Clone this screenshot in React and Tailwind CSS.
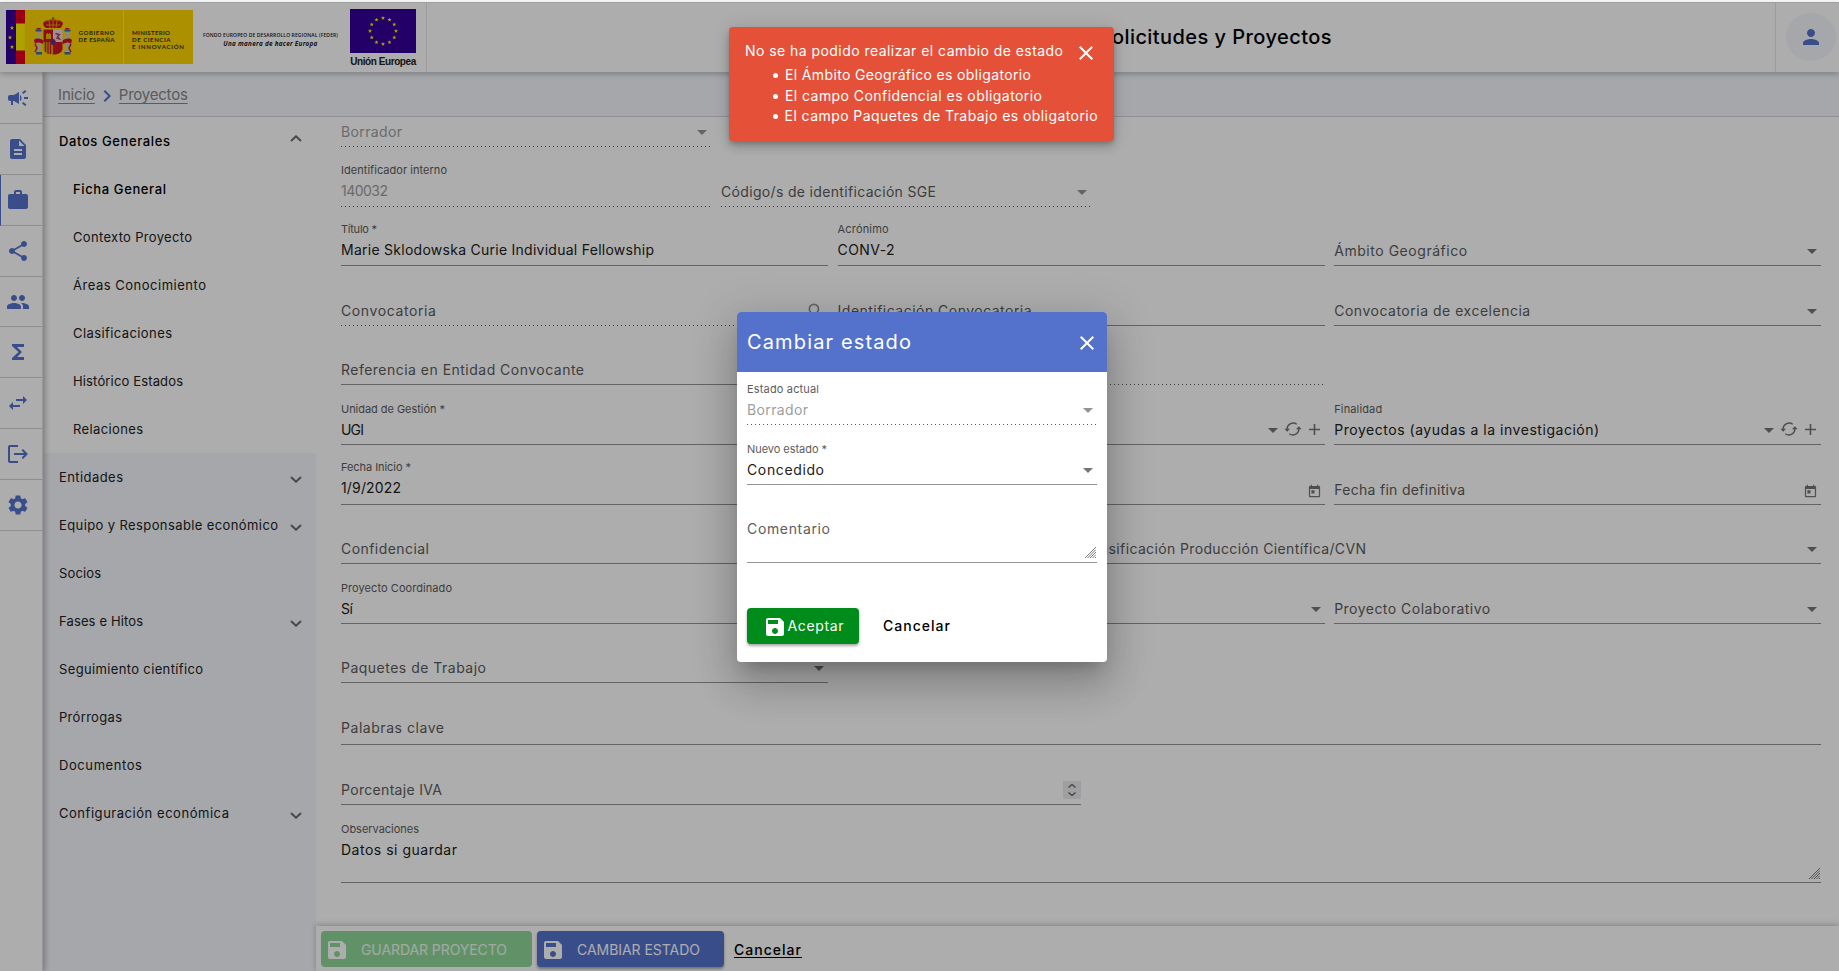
import React, { useLayoutEffect, useRef, useState } from "react";
import {
  MdCampaign, MdDescription, MdWork, MdShare, MdPeople, MdFunctions, MdSwapHoriz,
  MdLogout, MdSettings, MdPerson, MdSave, MdClose, MdToday, MdSearch, MdChevronRight, MdAdd,
} from "react-icons/md";

// Single-line text whose letter spacing is tuned so that it fills the given width.
function Fit({ w, className = "", children }) {
  const ref = useRef(null);
  const [spacing, setSpacing] = useState(0);
  useLayoutEffect(() => {
    const natural = ref.current.getBoundingClientRect().width;
    setSpacing((w - natural) / Math.max(1, String(children).length - 1));
  }, [w, children]);
  return (
    <span ref={ref} className={`inline-block whitespace-pre ${className}`} style={{ letterSpacing: `${spacing}px` }}>
      {children}
    </span>
  );
}

function Caret({ className = "text-[#757575]" }) {
  return (
    <svg className={`h-[5px] w-[10px] shrink-0 ${className}`} viewBox="0 0 10 5" fill="currentColor">
      <path d="M0 0h10L5 5z" />
    </svg>
  );
}

function Chevron({ up, className = "" }) {
  return (
    <svg className={`h-[7px] w-[12px] shrink-0 text-[#6b6b6b] ${className}`} viewBox="0 0 12 7" fill="none" stroke="currentColor" strokeWidth="2">
      <path d={up ? "M1 6l5-4.700L11 6" : "M1 1l5 4.700L11 1"} />
    </svg>
  );
}

function Refresh() {
  return (
    <svg className="h-[14px] w-[18px] shrink-0" viewBox="0 0 18 14" fill="none" stroke="currentColor" strokeWidth="1.4">
      <path d="M3.200 7.800A6 6 0 0 1 12.800 2.300M14.800 6.200A6 6 0 0 1 5.200 11.700" />
      <path d="M.4 6.700h5.600L3.200 9.700zM12 7.300h5.600L14.800 4.300z" fill="currentColor" stroke="none" />
    </svg>
  );
}

function Grip({ className = "" }) {
  return (
    <svg className={`h-[11px] w-[11px] ${className}`} viewBox="0 0 11 11" stroke="#6a6a6a" strokeWidth="0.9">
      <path d="M0 11L11 0M2.500 11L11 2.500M5 11l6-6M7.500 11L11 7.500M10 11l1-1" />
    </svg>
  );
}

function Field({ label, lw, value, vw, placeholder, pw, disabled, icon, tall }) {
  return (
    <div className="flex h-full flex-col justify-end">
      {label && (
        <div className="mb-[4px] h-4 text-[11px] leading-4 text-[#5c5c5c]">
          <Fit w={lw}>{label}</Fit>
        </div>
      )}
      <div className={`flex items-center justify-between text-sm leading-[18px] ${tall || "mb-[5px] h-[18px]"}`}>
        {value ? (
          <Fit w={vw} className={disabled ? "text-[#9e9e9e]" : "text-[#212121]"}>{value}</Fit>
        ) : (
          <Fit w={pw ?? 0} className="text-[#5c5c5c]">{placeholder ?? ""}</Fit>
        )}
        <div className="flex items-center pr-[4px] text-[#757575]">
          {icon === "select" && <Caret className={disabled ? "text-[#949494]" : "text-[#757575]"} />}
          {icon === "search" && <MdSearch className="mr-[-2px] size-[20px] text-[#949494]" />}
          {icon === "date" && <MdToday className="mr-[-1px] mt-[2px] size-[15px]" />}
          {icon === "entity" && (
            <>
              <Caret />
              <span className="mb-[2px] ml-[6px] flex items-center">
                <Refresh />
                <MdAdd className="ml-[3px] mr-[-3px] size-[19px]" />
              </span>
            </>
          )}
        </div>
      </div>
      {disabled ? (
        <div className="h-px bg-[repeating-linear-gradient(to_right,#5c5c5c_0,#5c5c5c_1px,transparent_1px,transparent_4px)]" />
      ) : (
        <div className="h-px bg-[#949494]" />
      )}
    </div>
  );
}

const thirds = "grid grid-cols-[487px_487px_487px] gap-x-[9.6px]";

function Row({ className, children }) {
  return <div className={`shrink-0 ${className}`}>{children}</div>;
}

function Form() {
  return (
    <main className="flex h-[809px] flex-col overflow-hidden bg-white pl-[25px]">
      <Row className="h-[30px] w-[370px]">
        <Field value="Borrador" vw={61} disabled icon="select" />
      </Row>
      <Row className="grid h-[60px] grid-cols-[370px_370px] gap-x-[10px]">
        <Field label="Identificador interno" lw={106} value="140032" vw={47} disabled tall="mb-[6px] h-[18px]" />
        <Field placeholder="Código/s de identificación SGE" pw={215} disabled icon="select" />
      </Row>
      <Row className={`h-[59px] ${thirds}`}>
        <Field label="Título *" lw={36} value="Marie Sklodowska Curie Individual Fellowship" vw={313} tall="mb-[6px] h-[18px]" />
        <Field label="Acrónimo" lw={51} value="CONV-2" vw={57} tall="mb-[6px] h-[18px]" />
        <Field placeholder="Ámbito Geográfico" pw={133} icon="select" />
      </Row>
      <Row className={`h-[60px] ${thirds}`}>
        <Field placeholder="Convocatoria" pw={95} disabled icon="search" />
        <Field placeholder="Identificación Convocatoria" pw={194} />
        <Field placeholder="Convocatoria de excelencia" pw={196} icon="select" />
      </Row>
      <Row className={`h-[59px] ${thirds}`}>
        <Field placeholder="Referencia en Entidad Convocante" pw={243} />
        <Field disabled />
      </Row>
      <Row className={`h-[60px] ${thirds}`}>
        <Field label="Unidad de Gestión *" lw={104} value="UGI" vw={23} />
        <Field icon="entity" />
        <Field label="Finalidad" lw={48} value="Proyectos (ayudas a la investigación)" vw={265} icon="entity" />
      </Row>
      <Row className={`h-[60px] ${thirds}`}>
        <Field label="Fecha Inicio *" lw={70} value="1/9/2022" vw={60} tall="mb-[7px] h-[18px]" />
        <Field icon="date" />
        <Field placeholder="Fecha fin definitiva" pw={131} icon="date" />
      </Row>
      <Row className="grid h-[59px] grid-cols-[735px_735px] gap-x-[10px]">
        <Field placeholder="Confidencial" pw={88} />
        <Field placeholder="Clasificación Producción Científica/CVN" pw={280} icon="select" />
      </Row>
      <Row className={`h-[60px] ${thirds}`}>
        <Field label="Proyecto Coordinado" lw={111} value="Sí" vw={12} />
        <Field icon="select" />
        <Field placeholder="Proyecto Colaborativo" pw={156} icon="select" />
      </Row>
      <Row className={`h-[59px] ${thirds}`}>
        <Field placeholder="Paquetes de Trabajo" pw={145} icon="select" />
      </Row>
      <Row className="h-[62px] w-[1480px]">
        <Field placeholder="Palabras clave" pw={103} tall="mb-[7px] h-[18px]" />
      </Row>
      <Row className="relative h-[60px] w-[740px]">
        <Field placeholder="Porcentaje IVA" pw={101} />
        <div className="absolute bottom-[6px] right-0 flex h-[18px] w-[18px] flex-col items-center justify-between bg-[#ebebed] py-[3px]">
          <svg className="h-[4px] w-[8px]" viewBox="0 0 8 4" fill="none" stroke="#6f6f6f" strokeWidth="1.5"><path d="M.5 3.500l3.500-3 3.500 3" /></svg>
          <svg className="h-[4px] w-[8px]" viewBox="0 0 8 4" fill="none" stroke="#6f6f6f" strokeWidth="1.5"><path d="M.5.5l3.500 3 3.500-3" /></svg>
        </div>
      </Row>
      <Row className="relative h-[78px] w-[1480px]">
        <Field label="Observaciones" lw={78} value="Datos si guardar" vw={116} tall="mb-[23px] h-[18px]" />
        <Grip className="absolute bottom-[4px] right-[1px]" />
      </Row>
    </main>
  );
}

const railIcons = [MdCampaign, MdDescription, MdWork, MdShare, MdPeople, MdFunctions, MdSwapHoriz, MdLogout, MdSettings];

function Rail() {
  return (
    <nav className="z-10 flex w-[43px] shrink-0 flex-col border-r border-[#e0e0e0] bg-white pt-[1px] text-[#5472cc] shadow-[2px_0_6px_rgba(0,0,0,0.3)]">
      {railIcons.map((Icon, i) => (
        <div
          key={i}
          className={`flex h-[50.9px] shrink-0 items-center border-b border-b-[#cfd2d6] ${i === 2 ? "border-l border-l-[#5472cc] pl-[5px]" : "pl-[6px]"}`}
        >
          <Icon className="size-[24px]" />
        </div>
      ))}
    </nav>
  );
}

const menu = [
  { t: "Datos Generales", w: 111, open: true, strong: true },
  { t: "Ficha General", w: 93, sub: true, strong: true },
  { t: "Contexto Proyecto", w: 119, sub: true },
  { t: "Áreas Conocimiento", w: 133, sub: true },
  { t: "Clasificaciones", w: 99, sub: true },
  { t: "Histórico Estados", w: 110, sub: true },
  { t: "Relaciones", w: 70, sub: true },
  { t: "Entidades", w: 64, more: true },
  { t: "Equipo y Responsable económico", w: 219, more: true },
  { t: "Socios", w: 42 },
  { t: "Fases e Hitos", w: 84, more: true },
  { t: "Seguimiento científico", w: 144 },
  { t: "Prórrogas", w: 63 },
  { t: "Documentos", w: 83 },
  { t: "Configuración económica", w: 170, more: true },
];

function Sidebar() {
  return (
    <aside className="flex w-[273px] shrink-0 flex-col bg-[#f4f7fc] text-[13px] text-[#212121]">
      {menu.map((m) => (
        <div
          key={m.t}
          className={`flex h-12 shrink-0 items-center justify-between pr-[14px] pt-[2px] ${m.sub ? "pl-[30px]" : "pl-[16px]"} ${m.sub || m.open ? "bg-white" : ""}`}
        >
          <Fit w={m.w} className={m.strong ? "font-medium text-black" : ""}>{m.t}</Fit>
          {m.open && <Chevron up className="mt-[-8px]" />}
          {m.more && <Chevron className="mt-[3px]" />}
        </div>
      ))}
    </aside>
  );
}

function SpainLogo() {
  return (
    <svg className="h-[54px] w-[187px]" viewBox="0 0 187 54" fontFamily="Lato, sans-serif" fontWeight="700" fontSize="6.1">
      <rect width="187" height="54" fill="#ffd500" />
      <rect width="10" height="54" fill="#330099" />
      <rect x="10" width="9" height="54" fill="#e3001b" />
      <rect x="10" y="13.500" width="9" height="27" fill="#ffee00" />
      <g fill="#ffee00">
        <path d="M6 15.800l.6 1.500h1.600l-1.300 1 .5 1.600L6 18.900l-1.400 1 .5-1.600-1.300-1h1.600z" />
        <path d="M4 25.300l.6 1.500h1.600l-1.300 1 .5 1.600L4 28.400l-1.400 1 .5-1.600-1.300-1h1.600z" />
        <path d="M6 34.800l.6 1.500h1.600l-1.300 1 .5 1.600L6 37.900l-1.400 1 .5-1.600-1.300-1h1.600z" />
      </g>
      <path d="M117.500 0v54" stroke="#f5e68c" strokeWidth="1" />
      <g>
        <path d="M40 18c-3-2-4-6-1-7 3-2 13-2 16 0 3 1 2 5-1 7z" fill="#d0142c" />
        <path d="M38 12c3-3 15-3 18 0M40 15h14M47 8v10M43 10l1 8M51 10l-1 8" stroke="#e8b400" strokeWidth=".8" fill="none" />
        <circle cx="47" cy="8.500" r="1.200" fill="#8a6a00" />
        <rect x="31" y="21" width="3.500" height="22" fill="#c9c9c9" />
        <rect x="59.500" y="21" width="3.500" height="22" fill="#c9c9c9" />
        <path d="M29.500 19.500h6v2h-6zM58.500 19.500h6v2h-6zM30 42h6v2.500h-6zM58.500 42h6v2.500h-6z" fill="#3d6ea8" />
        <path d="M30.500 18l4.500 0-1 1.500h-3zM59 18h4.500l-1 1.500h-3z" fill="#d0142c" />
        <path d="M28 30c3-3 8-1 10 1l-1 3c-3-2-6-2-8 0zM66 30c-3-3-8-1-10 1l1 3c3-2 6-2 8 0z" fill="#d0142c" />
        <path d="M29 34l2 4-2 4M65 34l-2 4 2 4" stroke="#d0142c" strokeWidth="1.500" fill="none" />
        <path d="M37.500 19.500H47V32h-9.500z" fill="#d0142c" />
        <path d="M47 19.500h9.500V32H47z" fill="#e9d5dc" />
        <path d="M37.500 32H47v12.500c-5 0-9.500-2-9.500-6z" fill="#d8a800" />
        <path d="M39.500 32v10M42 32v12M44.500 32v12" stroke="#d0142c" strokeWidth="1.200" />
        <path d="M47 32h9.500v6.500c0 4-4.500 6-9.500 6z" fill="#d0142c" />
        <path d="M40 29v-5h1v-1h1v1h1v-1h1v1h1v5z" fill="#e8b400" />
        <path d="M49.500 23.500l4 1-2 2 2 2.500-3.500-1" stroke="#b03070" strokeWidth="1.300" fill="none" />
        <ellipse cx="47" cy="32" rx="2.300" ry="2.800" fill="#26469c" stroke="#d0142c" strokeWidth=".8" />
      </g>
      <g fill="#3a3000">
        <text x="72.500" y="24.500" textLength="36">GOBIERNO</text>
        <text x="72.500" y="31.500" textLength="36">DE ESPAÑA</text>
        <text x="126" y="24.500" textLength="38">MINISTERIO</text>
        <text x="126" y="31.500" textLength="38.500">DE CIENCIA</text>
        <text x="126" y="38.800" textLength="52">E INNOVACIÓN</text>
      </g>
    </svg>
  );
}

const STAR = "M0-2.100L.6-.65 2.100-.65.9.3 1.300 1.800 0 .9-1.300 1.800-.9.3-2.100-.65-.6-.65z";
const stars = Array.from({ length: 12 }, (_, i) => {
  const a = (i * Math.PI) / 6;
  return [33 + 13 * Math.sin(a), 22 - 13 * Math.cos(a)];
});

function Header() {
  return (
    <header className="z-20 flex h-[69px] shrink-0 items-stretch bg-white shadow-[0_2px_6px_rgba(0,0,0,0.25)]">
      <div className="flex w-[427px] items-start border-r border-[#e3e6ea] pl-[5.500px] pt-[6.500px]">
        <SpainLogo />
        <div className="ml-[10.500px] mt-[22px] flex w-[135px] flex-col items-center font-['Open_Sans',sans-serif] text-[#222]">
          <Fit w={135} className="text-[5px] font-semibold leading-[7px]">FONDO EUROPEO DE DESARROLLO REGIONAL (FEDER)</Fit>
          <Fit w={94} className="mt-[1px] text-[6.300px] font-bold italic leading-[8px]">Una manera de hacer Europa</Fit>
        </div>
        <div className="ml-[12px] mt-[-1px] flex w-[66px] flex-col items-center font-['Liberation_Sans',sans-serif]">
          <svg className="h-[44px] w-[66px]" viewBox="0 0 66 44">
            <rect width="66" height="44" fill="#330099" />
            {stars.map(([x, y], i) => (
              <path key={i} d={STAR} transform={`translate(${x} ${y})`} fill="#ffee00" />
            ))}
          </svg>
          <Fit w={66} className="mt-[3px] text-[10px] font-bold leading-[12px] text-[#222]">Unión Europea</Fit>
        </div>
      </div>
      <div className="flex flex-1 items-center justify-end pb-[1px] pr-[443px]">
        <Fit w={233} className="text-[20px] font-medium leading-7 text-black">Solicitudes y Proyectos</Fit>
      </div>
      <div className="flex w-[64px] items-start border-l border-[#e3e6ea] pl-[10px] pt-[10px]">
        <div className="flex h-[48px] w-[50px] items-center justify-center rounded-[50%] bg-[#f4f7fc]">
          <MdPerson className="size-[24px] text-[#5472cc]" />
        </div>
      </div>
    </header>
  );
}

function ActionBar() {
  return (
    <footer className="z-10 flex h-[45px] shrink-0 items-start gap-[5px] bg-white pl-[5px] pt-[5px] shadow-[0_-1px_6px_rgba(0,0,0,0.25)]">
      <button className="flex h-9 w-[211px] items-center rounded bg-[#90d899] pl-[4px] text-[14px] text-white/85">
        <MdSave className="mt-[2px] size-[24px] text-white" />
        <Fit w={146} className="ml-[12px]">GUARDAR PROYECTO</Fit>
      </button>
      <button className="flex h-9 w-[187px] items-center rounded bg-[#5472cc] pl-[4px] text-[14px] text-white shadow-[0_2px_3px_rgba(0,0,0,0.35)]">
        <MdSave className="mt-[2px] size-[24px]" />
        <Fit w={123} className="ml-[12px]">CAMBIAR ESTADO</Fit>
      </button>
      <a className="ml-[5px] flex h-9 items-center text-[14px] font-medium text-black">
        <Fit w={67} className="underline underline-offset-2">Cancelar</Fit>
      </a>
    </footer>
  );
}

function Dialog() {
  return (
    <div className="absolute left-[737px] top-[312px] z-40 rounded shadow-[0_11px_15px_-7px_rgba(0,0,0,0.2),0_24px_38px_3px_rgba(0,0,0,0.14),0_9px_46px_8px_rgba(0,0,0,0.12)]">
      <div className="flex h-[350px] w-[370px] flex-col overflow-hidden rounded bg-white">
        <div className="flex h-[60px] shrink-0 items-center justify-between bg-[#5472cc] pl-[10px] pr-[8px] text-white">
          <Fit w={164} className="text-[20px] leading-7">Cambiar estado</Fit>
          <MdClose className="mt-[2px] size-[24px]" />
        </div>
        <div className="flex flex-col px-[10px]">
          <div className="h-[53px]"><Field label="Estado actual" lw={72} value="Borrador" vw={61} disabled icon="select" /></div>
          <div className="h-[60px]"><Field label="Nuevo estado *" lw={80} value="Concedido" vw={77} icon="select" /></div>
          <div className="relative h-[78px]">
            <Field placeholder="Comentario" pw={83} tall="mb-[24px] h-[18px]" />
            <Grip className="absolute bottom-[5px] right-[1px]" />
          </div>
          <div className="mt-[45px] flex items-center">
            <button className="flex h-9 w-[112px] items-center rounded bg-[#008c1a] pl-[15.500px] text-[14px] text-white shadow-[0_2px_3px_rgba(0,0,0,0.35)]">
              <MdSave className="mt-[2px] size-[24px]" />
              <Fit w={56} className="mb-[1px] ml-[1px]">Aceptar</Fit>
            </button>
            <Fit w={67} className="mb-[1px] ml-[24px] text-[14px] font-medium text-black">Cancelar</Fit>
          </div>
        </div>
      </div>
    </div>
  );
}

function Toast() {
  return (
    <div className="absolute left-[729px] top-[27px] z-50 flex h-[114px] w-[385px] rounded bg-[#e45138] pl-4 text-sm text-white shadow-[0_3px_5px_-1px_rgba(0,0,0,0.2),0_6px_10px_rgba(0,0,0,0.14),0_1px_18px_rgba(0,0,0,0.12)]">
      <div className="w-[353px] shrink-0 pt-[14px] leading-[20px]">
        <Fit w={318}>No se ha podido realizar el cambio de estado</Fit>
        <ul className="mt-[4px] leading-[20.500px]">
          {[
            ["El Ámbito Geográfico es obligatorio", 246],
            ["El campo Confidencial es obligatorio", 257],
            ["El campo Paquetes de Trabajo es obligatorio", 313],
          ].map(([t, w]) => (
            <li key={t} className="flex h-[20.500px] items-center">
              <span className="ml-[28px] mr-[7px] mt-px size-[5px] rounded-full bg-white" />
              <Fit w={w}>{t}</Fit>
            </li>
          ))}
        </ul>
      </div>
      <MdClose className="absolute right-[16px] top-[14px] size-[24px]" />
    </div>
  );
}

export default function App() {
  return (
    <div className="relative flex h-[971px] w-[1839px] flex-col overflow-hidden bg-[#f8f8f8] pt-[3px] font-['Inter',sans-serif]">
      <Header />
      <div className="flex min-h-0 flex-1">
        <Rail />
        <div className="flex min-w-0 flex-1 flex-col">
          <div className="flex h-[45px] shrink-0 items-center border-b border-[#d2d5da] bg-[#f4f7fc] pl-[15px] pt-[3px] text-[15px] text-[#868686]">
            <Fit w={37} className="underline underline-offset-3">Inicio</Fit>
            <MdChevronRight className="size-[24px] text-[#5472cc]" />
            <Fit w={69} className="underline underline-offset-3">Proyectos</Fit>
          </div>
          <div className="flex min-h-0 flex-1">
            <Sidebar />
            <div className="flex min-w-0 flex-1 flex-col">
              <Form />
              <ActionBar />
            </div>
          </div>
        </div>
      </div>
      <div className="absolute inset-x-0 bottom-0 top-[2px] z-30 bg-black/32" />
      <Dialog />
      <Toast />
    </div>
  );
}
